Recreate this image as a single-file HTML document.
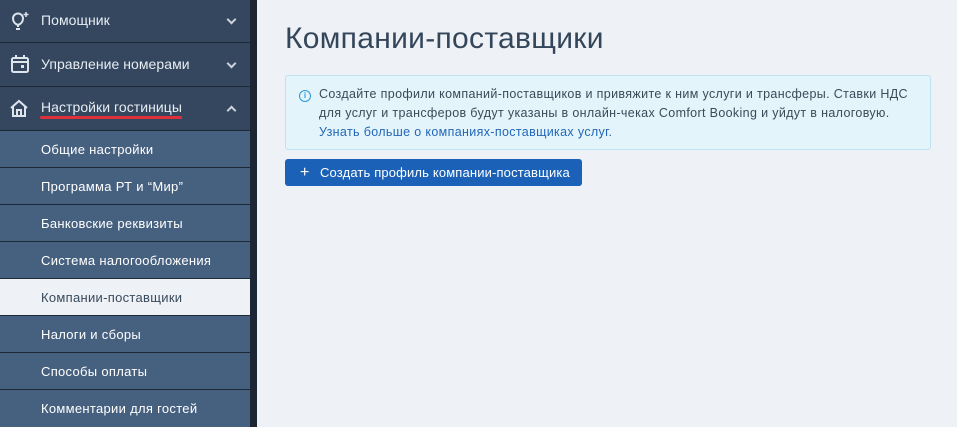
<!DOCTYPE html>
<html><head><meta charset="utf-8"><style>
*{box-sizing:border-box;margin:0;padding:0}
body{width:957px;height:427px;overflow:hidden;background:#eef1f5;font-family:"Liberation Sans","DejaVu Sans",sans-serif;position:relative}
#sb{position:absolute;left:0;top:0;width:250px;height:427px;background:#1e2938}
#strip{position:absolute;left:250px;top:0;width:7px;height:427px;background:#1c2533}
.top{position:absolute;left:0;width:250px;background:#34475f;color:#e8edf3;font-size:14px;letter-spacing:0.05px}
.top span{position:absolute;left:41px}
.chev{position:absolute;left:228px;width:7px;height:7px;border-right:2px solid #c9d2dd;border-bottom:2px solid #c9d2dd}
.sub{position:absolute;left:0;width:250px;height:36px;background:#46607f;color:#fff;font-size:13px;line-height:37px;padding-left:41px;letter-spacing:0.3px}
.sub.act{background:#eef1f5;color:#3a4a5c}
h1{position:absolute;left:285px;top:22px;font-size:30px;font-weight:normal;color:#34465a;letter-spacing:0.3px}
#info{position:absolute;left:285px;top:75px;width:646px;height:75px;background:#e3f4fb;border:1px solid #bfe2f2;border-radius:3px;padding:9px 0 0 33px;font-size:12.5px;line-height:19px;color:#3d4a58;white-space:nowrap;letter-spacing:0.35px}
#info a{color:#2367b8;text-decoration:none}
#ic{position:absolute;left:13px;top:14px;width:12px;height:12px;border:1.5px solid #2a9bd8;border-radius:50%;font-size:8px;line-height:9px;text-align:center;color:#2a9bd8;font-weight:bold;letter-spacing:0}
#btn{position:absolute;left:285px;top:159px;width:297px;height:27px;background:#1a61b7;border-radius:3px;color:#fff;font-size:13px;line-height:27px;padding-left:35px;letter-spacing:0.15px}
#btn b{position:absolute;left:15px;top:0;font-weight:normal;font-size:16px}
</style></head><body>
<div id="sb">
<div class="top" style="top:0;height:42px"><svg style="position:absolute;left:9px;top:10px" width="22" height="22" viewBox="0 0 22 22" fill="none" stroke="#dfe5ec" stroke-width="2"><path d="M9 17v-2c-3-1-5-3.5-5-6.5a5 5 0 0 1 10 0c0 3-2 5.5-5 6.5M7 19h4"/><path d="M17 2v5M14.5 4.5h5" stroke-width="1.5"/></svg><span style="top:12px">Помощник</span><div class="chev" style="top:16px;transform:rotate(45deg)"></div></div>
<div class="top" style="top:43px;height:43px"><svg style="position:absolute;left:10px;top:11px" width="20" height="20" viewBox="0 0 20 20" fill="none" stroke="#dfe5ec" stroke-width="2"><rect x="2" y="4" width="16" height="14" rx="1.5"/><path d="M6 1v4M14 1v4M2 8h16"/><rect x="11" y="11" width="3" height="3" fill="#dfe5ec" stroke="none"/></svg><span style="top:13px">Управление номерами</span><div class="chev" style="top:17px;transform:rotate(45deg)"></div></div>
<div class="top" style="top:87px;height:43px"><svg style="position:absolute;left:9px;top:11px" width="20" height="20" viewBox="0 0 20 20" fill="none" stroke="#dfe5ec" stroke-width="2"><path d="M2 10L10 3l8 7M4 8v10h12V8M8 18v-6h4v6"/></svg><span style="top:12px">Настройки гостиницы</span><div style="position:absolute;left:40px;top:29px;width:142px;height:3px;background:#e0303a;border-radius:2px"></div><div class="chev" style="top:20px;transform:rotate(225deg)"></div></div>
<div class="sub" style="top:131px">Общие настройки</div>
<div class="sub" style="top:168px">Программа РТ и “Мир”</div>
<div class="sub" style="top:205px">Банковские реквизиты</div>
<div class="sub" style="top:242px">Система налогообложения</div>
<div class="sub act" style="top:279px">Компании-поставщики</div>
<div class="sub" style="top:316px">Налоги и сборы</div>
<div class="sub" style="top:353px">Способы оплаты</div>
<div class="sub" style="top:390px;height:37px">Комментарии для гостей</div>
</div>
<div id="strip"></div>
<h1>Компании-поставщики</h1>
<div id="info"><div id="ic">i</div>Создайте профили компаний-поставщиков и привяжите к ним услуги и трансферы. Ставки НДС<br>для услуг и трансферов будут указаны в онлайн-чеках Comfort Booking и уйдут в налоговую.<br><a>Узнать больше о компаниях-поставщиках услуг.</a></div>
<div id="btn"><b>+</b>Создать профиль компании-поставщика</div>
</body></html>
